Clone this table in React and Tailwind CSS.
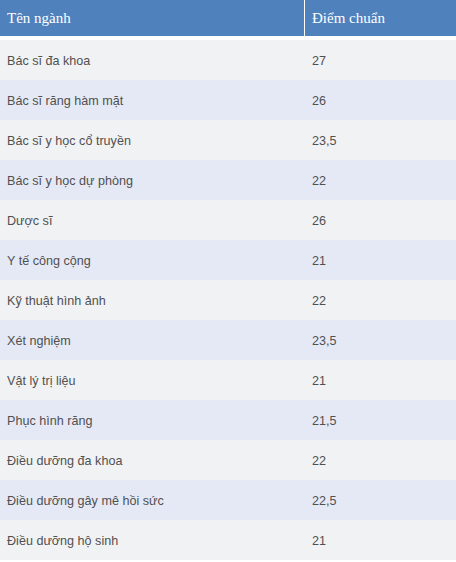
export default function App() {
  const rows = [
    ["Bác sĩ đa khoa", "27"],
    ["Bác sĩ răng hàm mặt", "26"],
    ["Bác sĩ y học cổ truyền", "23,5"],
    ["Bác sĩ y học dự phòng", "22"],
    ["Dược sĩ", "26"],
    ["Y tế công cộng", "21"],
    ["Kỹ thuật hình ảnh", "22"],
    ["Xét nghiệm", "23,5"],
    ["Vật lý trị liệu", "21"],
    ["Phục hình răng", "21,5"],
    ["Điều dưỡng đa khoa", "22"],
    ["Điều dưỡng gây mê hồi sức", "22,5"],
    ["Điều dưỡng hộ sinh", "21"],
  ];
  return (
    <div className="w-[456px] h-[562px] bg-white flex flex-col">
      <div className="flex h-[36px] bg-[#4f81bd] text-white text-[15px] font-['Liberation_Serif',serif]">
        <div className="w-[304px] flex items-center pl-[7px]">Tên ngành</div>
        <div className="w-px bg-white" />
        <div className="flex-1 flex items-center pl-[7px]">Điểm chuẩn</div>
      </div>
      <div className="h-[4px]" />
      {rows.map(([name, score], i) => (
        <div
          key={i}
          className={`flex h-[40px] pt-[2px] text-[12.6px] text-[#505050] font-['Liberation_Sans',sans-serif] ${
            i % 2 === 0 ? "bg-[#f1f2f4]" : "bg-[#e5e9f6]"
          }`}
        >
          <div className="w-[305px] flex items-center pl-[7px]">{name}</div>
          <div className="flex-1 flex items-center pl-[7px]">{score}</div>
        </div>
      ))}
    </div>
  );
}
